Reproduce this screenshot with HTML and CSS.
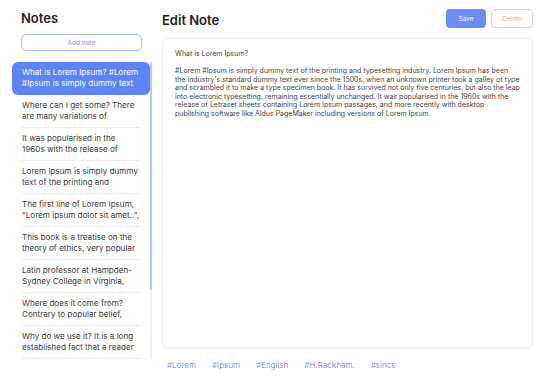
FILE: index.html
```html
<!DOCTYPE html>
<html lang="en">
<head>
<meta charset="utf-8">
<title>Notes</title>
<link rel="stylesheet" href="styles.css">
</head>
<body>
<div class="app">
  <aside class="sidebar">
    <h1 class="title">Notes</h1>
    <button class="add-btn">Add note</button>
    <div class="list-wrap">
      <ul class="note-list">
        <li class="note active"><span>What is Lorem Ipsum? #Lorem #Ipsum is simply dummy text</span></li>
        <li class="note"><span>Where can I get some? There are many variations of</span></li>
        <li class="note"><span>It was popularised in the 1960s with the release of</span></li>
        <li class="note"><span>Lorem Ipsum is simply dummy text of the printing and</span></li>
        <li class="note"><span>The first line of Lorem Ipsum, "Lorem ipsum dolor sit amet..",</span></li>
        <li class="note"><span>This book is a treatise on the theory of ethics, very popular</span></li>
        <li class="note"><span>Latin professor at Hampden-Sydney College in Virginia,</span></li>
        <li class="note"><span>Where does it come from? Contrary to popular belief,</span></li>
        <li class="note"><span>Why do we use it? It is a long established fact that a reader</span></li>
      </ul>
      <div class="scrollbar"><div class="thumb"></div></div>
    </div>
  </aside>
  <main class="main">
    <div class="header">
      <h2 class="title">Edit Note</h2>
      <div class="actions">
        <button class="btn save">Save</button>
        <button class="btn delete">Delete</button>
      </div>
    </div>
    <div class="editor">What is Lorem Ipsum?

#Lorem #Ipsum is simply dummy text of the printing and typesetting industry. Lorem Ipsum has been the industry's standard dummy text ever since the 1500s, when an unknown printer took a galley of type and scrambled it to make a type specimen book. It has survived not only five centuries, but also the leap into electronic typesetting, remaining essentially unchanged. It was popularised in the 1960s with the release of Letraset sheets containing Lorem Ipsum passages, and more recently with desktop publishing software like Aldus PageMaker including versions of Lorem Ipsum.</div>
    <div class="tags">
      <span class="tag">#Lorem</span>
      <span class="tag">#Ipsum</span>
      <span class="tag">#English</span>
      <span class="tag">#H.Rackham.</span>
      <span class="tag">#since</span>
    </div>
  </main>
</div>
</body>
</html>
```

FILE: styles.css
```css
* { box-sizing: border-box; }
html, body {
  margin: 0;
  padding: 0;
  background: #ffffff;
  font-family: Inter, "Noto Sans", sans-serif;
  color: #2b2b2b;
}
.app {
  display: flex;
  gap: 10px;
  width: 543px;
  height: 383px;
  overflow: hidden;
}
.sidebar {
  width: 152px;
  flex: none;
  display: flex;
  flex-direction: column;
  padding-left: 12px;
}
.title {
  margin: 0;
  font-size: 13px;
  line-height: 16px;
  font-weight: 600;
  color: #222;
}
.sidebar .title {
  padding: 10px 0 0 9px;
}
.add-btn {
  margin: 8px 0 0 9px;
  width: 121px;
  height: 17px;
  border: 1px solid #a9bcf3;
  border-radius: 5px;
  background: #fff;
  color: #7f99ee;
  font-family: inherit;
  font-size: 6.5px;
  padding: 0;
}
.list-wrap {
  display: flex;
  margin-top: 11px;
  height: 297px;
}
.note-list {
  flex: 1;
  list-style: none;
  margin: 0;
  padding: 0;
  overflow: hidden;
}
.scrollbar {
  width: 2px;
  flex: none;
  background: #ededf2;
}
.thumb {
  height: 228px;
  background: #b9c8f4;
}
.note {
  height: 33px;
  padding: 0 10px;
  border-radius: 6px;
  font-size: 8.1px;
  line-height: 11px;
  color: #3a3a3a;
}
.note span {
  display: flex;
  align-items: center;
  height: 33px;
  border-bottom: 1px solid #ececec;
}
.note.active {
  background: #5c84f6;
  color: #ffffff;
}
.note.active span { border-bottom-color: transparent; }
.main {
  flex: 1;
  display: flex;
  flex-direction: column;
  padding-right: 10px;
}
.header {
  display: flex;
  justify-content: space-between;
  align-items: center;
  height: 38px;
}
.header .title { padding-top: 2px; }
.actions {
  display: flex;
  gap: 5px;
  margin-bottom: 1px;
}
.btn {
  height: 19px;
  border-radius: 4px;
  font-family: inherit;
  font-size: 6.5px;
  padding: 0;
}
.save {
  width: 40px;
  background: #6a8df7;
  border: none;
  color: #ffffff;
}
.delete {
  width: 42px;
  background: #fff;
  border: 1px solid #f4c6c0;
  color: #efa79e;
}
.editor {
  height: 310px;
  border: 1px solid #efefef;
  border-radius: 5px;
  box-shadow: 0 1px 2px rgba(0,0,0,0.03);
  padding: 11px 12px;
  font-size: 7px;
  line-height: 8.5px;
  color: #444;
  white-space: pre-wrap;
}
.tags {
  display: flex;
  gap: 16px;
  padding: 0 0 0 5px;
  height: 34px;
  align-items: center;
}
.tag {
  font-size: 8px;
  color: #7f98ee;
}
```
